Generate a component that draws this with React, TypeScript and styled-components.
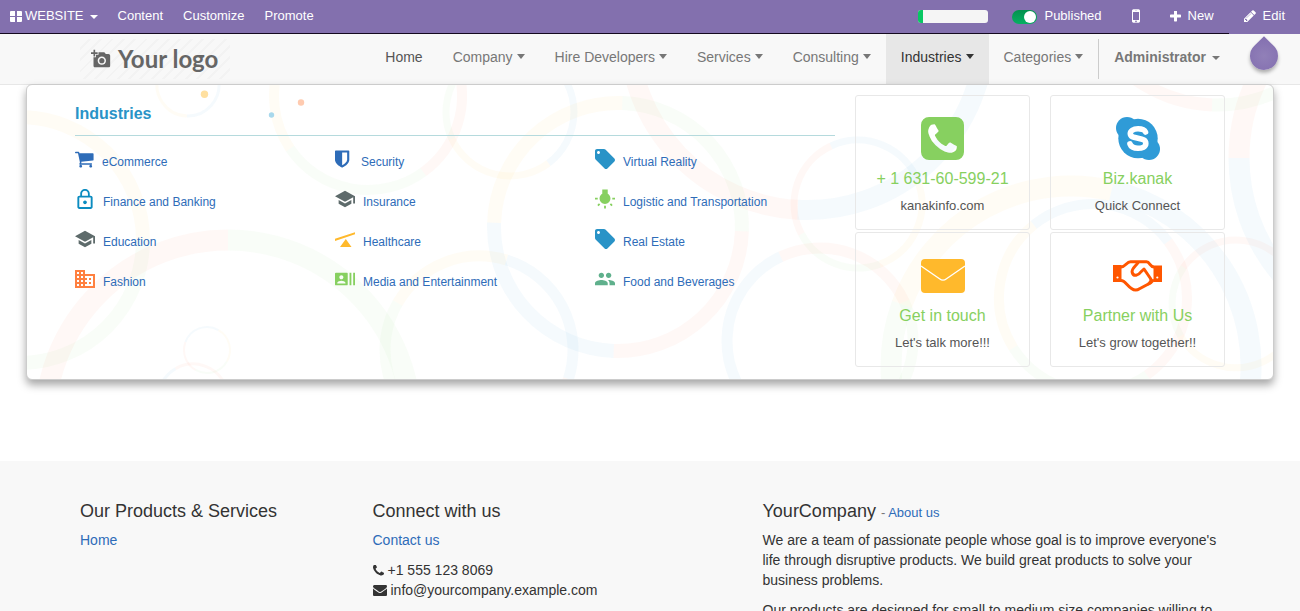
import React from 'react';
import styled, { createGlobalStyle, css } from 'styled-components';
import { MdAddAPhoto } from 'react-icons/md';

const color = {
  bar: '#8370ae',
  link: '#2e6cb8',
  sky: '#2993c7',
  leaf: '#87d060',
  amber: '#ffb92c',
  coral: '#ff8040',
  flame: '#ff5600',
  slate: '#5e6b6b',
};

const GlobalStyle = createGlobalStyle`
  *, *::before, *::after { box-sizing: border-box; }
  body {
    margin: 0;
    background: #fff;
    color: #333;
    font: 14px/20px "Liberation Sans", Arial, sans-serif;
  }
  a { color: ${color.link}; text-decoration: none; }
  button { font: inherit; color: inherit; background: none; border: 0; padding: 0; cursor: pointer; }
  h2, h3, h4, p, ul { margin: 0; padding: 0; font-weight: normal; }
  ul { list-style: none; }
  svg { display: block; flex: none; }
`;

/* ---------- Page shell ---------- */

const Page = styled.div`
  height: 100vh;
  overflow: hidden auto;
  scrollbar-width: none;
`;

const Container = styled.div`
  max-width: 1170px;
  margin: 0 auto;
  padding: 0 15px;
`;

/* ---------- Editor bar ---------- */

const EditorBar = styled.header`
  display: flex;
  justify-content: space-between;
  height: 34px;
  background: ${color.bar};
  box-shadow: inset 0 -1px #14091f;
  color: #fff;
  font-size: 13px;
  line-height: 32px;
`;

const BarGroup = styled.div`
  display: flex;
`;

const BarItem = styled.button<{ $pad?: number; $gap?: number; $filled?: boolean }>`
  display: flex;
  align-items: center;
  gap: ${(p) => p.$gap ?? 6}px;
  height: 34px;
  padding: 0 ${(p) => p.$pad ?? 15}px 2px;
  ${(p) => p.$filled && css`background: ${color.bar};`}
`;

const Progress = styled.div`
  align-self: flex-start;
  width: 70px;
  height: 13px;
  margin: 10px 9px 0 0;
  border-radius: 3px;
  overflow: hidden;
  background: #f5f5f5;
`;

const ProgressFill = styled.div`
  height: 100%;
  background: #08c763;
`;

const PublishLabel = styled.label`
  display: flex;
  align-items: center;
  gap: 7px;
  height: 34px;
  padding: 0 15px 2px;
`;

const Switch = styled.input`
  appearance: none;
  display: flex;
  justify-content: flex-end;
  width: 25px;
  height: 14px;
  margin: 2px 0 0;
  padding: 1px;
  border-radius: 7px;
  background: linear-gradient(#03914e, #06b062);
  &::after {
    content: '';
    width: 12px;
    height: 12px;
    border-radius: 50%;
    background: #fff;
  }
`;

const Caret = styled.span<{ $tall?: boolean }>`
  display: inline-block;
  margin-left: ${(p) => (p.$tall ? 4 : 6)}px;
  vertical-align: ${(p) => (p.$tall ? '3px' : 'middle')};
  border: 4px solid transparent;
  border-top: ${(p) => (p.$tall ? 5 : 4)}px solid currentColor;
  border-bottom: 0;
`;

const DropTip = styled.span`
  position: absolute;
  top: 8px;
  right: 22px;
  width: 28px;
  height: 28px;
  border-radius: 0 50% 50% 50%;
  transform: rotate(45deg);
  background: radial-gradient(#9180b8, #836fb0);
  box-shadow: 2px 2px 4px rgba(0, 0, 0, 0.3);
`;

/* ---------- Site navigation ---------- */

const SiteHeader = styled.div`
  position: relative;
  background: #f8f8f8;
  border-bottom: 1px solid #e7e7e7;
`;

const HeaderRow = styled(Container)`
  display: flex;
  justify-content: space-between;
  padding-right: 0;
`;

const Logo = styled.a`
  display: flex;
  align-items: center;
  gap: 7px;
  width: 150px;
  height: 40px;
  margin: 5px 0;
  padding-left: 11px;
  color: #666;
  font: bold 24px/40px Lato, sans-serif;
  white-space: nowrap;
  background: repeating-linear-gradient(135deg, #f8f8f8 0 6px, #f3f3f3 6px 8px);
`;

const Menu = styled.ul`
  display: flex;
  height: 50px;
`;

const MenuLink = styled.a<{ $active?: boolean; $current?: boolean }>`
  display: block;
  height: 50px;
  padding: 13px 15px;
  color: ${(p) => (p.$active ? '#333' : p.$current ? '#555' : '#777')};
  ${(p) => p.$active && css`background: #e7e7e7;`}
`;

const AccountItem = styled.li`
  height: 40px;
  margin: 5px 0;
  border-left: 1px solid #ccc;
`;

const AccountLink = styled.a`
  display: block;
  padding: 8px 15px;
  color: #777;
  font-weight: bold;
`;

/* ---------- Industries panel ---------- */

const Panel = styled.section`
  position: absolute;
  z-index: 2;
  top: 50px;
  left: 2%;
  right: 2%;
  padding: 10px 48px 12px;
  border: 1px solid #ccc;
  border-radius: 6px;
  background: #fff;
  box-shadow: 0 5px 8px rgba(0, 0, 0, 0.35);
  overflow: hidden;
`;

const Rings = styled.svg`
  position: absolute;
  inset: 0;
  width: 100%;
  height: 100%;
`;

const PanelBody = styled.div`
  position: relative;
  display: grid;
  grid-template-columns: 760fr 370fr;
  gap: 20px;
`;

const PanelTitle = styled.h3`
  padding: 9px 0 11px;
  margin-bottom: 5px;
  border-bottom: 1px solid #b5dadd;
  color: ${color.sky};
  font-size: 16px;
  font-weight: bold;
`;

const IndustryList = styled.ul`
  display: grid;
  grid-template-columns: repeat(3, 1fr);
  column-gap: 20px;
`;

const IndustryLink = styled.a`
  display: flex;
  gap: 8px;
  height: 40px;
  font-size: 12px;
  line-height: 42px;
  svg { margin-top: 8px; }
`;

const CardGrid = styled.div`
  display: grid;
  grid-template-columns: 1fr 1fr;
  gap: 2px 20px;
`;

const Card = styled.a`
  padding: 21px 0 14px;
  border: 1px solid #e8e8e8;
  border-radius: 3px;
  text-align: center;
`;

const CardIcon = styled.div`
  display: flex;
  align-items: center;
  justify-content: center;
  height: 43px;
`;

const CardTitle = styled.h4`
  margin: 9px 0 8px;
  color: ${color.leaf};
  font-size: 16px;
`;

const CardText = styled.p`
  color: #555;
  font-size: 13px;
  line-height: 18px;
`;

/* ---------- Footer ---------- */

const Content = styled.main`
  min-height: 376px;
`;

const Footer = styled.footer`
  padding: 40px 0;
  background: #f8f8f8;
`;

const FooterGrid = styled(Container)`
  display: grid;
  grid-template-columns: 3fr 4fr 5fr;
  padding: 0;
`;

const FooterColumn = styled.div`
  padding: 0 15px;
`;

const FooterTitle = styled.h4`
  margin-bottom: 9px;
  font-size: 18px;
`;

const TitleNote = styled.small`
  color: #777;
  font-size: 13px;
  line-height: 1;
`;

const Paragraph = styled.p`
  margin-bottom: 10px;
`;

const ContactLine = styled.div`
  display: flex;
  align-items: center;
  gap: 4px;
`;

/* ---------- Icons ---------- */

type IconProps = { d: string; box: string; w: number; h: number; fill?: string };

const Icon = ({ d, box, w, h, fill = 'currentColor' }: IconProps) => (
  <svg width={w} height={h} viewBox={box} fill={fill} aria-hidden="true">
    <path d={d} />
  </svg>
);

const paths = {
  grid: 'M0 1a1 1 0 0 1 1-1h4v5H0zM7 0h4a1 1 0 0 1 1 1v4H7zM0 6h5v5H1a1 1 0 0 1-1-1zM7 6h5v4a1 1 0 0 1-1 1H7z',
  mobile:
    'M976 1408q0-33-23.500-56.500t-56.500-23.500-56.500 23.500-23.500 56.500 23.500 56.500 56.500 23.500 56.500-23.500 23.500-56.500zm208-160v-704q0-13-9.500-22.500t-22.500-9.500h-512q-13 0-22.500 9.500t-9.500 22.500v704q0 13 9.500 22.500t22.500 9.500h512q13 0 22.500-9.500t9.500-22.500zm-192-848q0-16-16-16h-160q-16 0-16 16t16 16h160q16 0 16-16zm288-16v1024q0 52-38 90t-90 38h-512q-52 0-90-38t-38-90v-1024q0-52 38-90t90-38h512q52 0 90 38t38 90z',
  plus: 'M1600 736v192q0 40-28 68t-68 28h-416v416q0 40-28 68t-68 28h-192q-40 0-68-28t-28-68v-416h-416q-40 0-68-28t-28-68v-192q0-40 28-68t68-28h416v-416q0-40 28-68t68-28h192q40 0 68 28t28 68v416h416q40 0 68 28t28 68z',
  pencil:
    'M491 1536l91-91-235-235-91 91v107h128v128h107zm523-928q0-22-22-22-10 0-17 7l-542 542q-7 7-7 17 0 22 22 22 10 0 17-7l542-542q7-7 7-17zm-54-192l416 416-832 832h-416v-416zm683 96q0 53-37 90l-166 166-416-416 166-165q36-38 90-38 53 0 91 38l235 234q37 39 37 91z',
  cart: 'M704 1536q0 52-38 90t-90 38-90-38-38-90 38-90 90-38 90 38 38 90zm896 0q0 52-38 90t-90 38-90-38-38-90 38-90 90-38 90 38 38 90zm128-1088v512q0 24-16.500 42.500t-40.500 21.500l-1044 122q13 60 13 70 0 16-24 64h920q26 0 45 19t19 45-19 45-45 19h-1024q-26 0-45-19t-19-45q0-11 8-31.500t16-36 21.500-40 15.500-29.500l-177-823h-204q-26 0-45-19t-19-45 19-45 45-19h256q16 0 28.500 6.500t19.500 15.500 13 24.500 8 26 5.500 29.500 4.500 26h1201q26 0 45 19t19 45z',
  shield:
    'M1344 960v-640h-448v1137q119-63 213-137 235-184 235-360zm192-768v768q0 86-33.500 170.500t-83 150-118 127.500-126.500 103-121 77.500-89.500 49.500-42.500 20q-12 6-26 6t-26-6q-16-7-42.500-20t-89.500-49.500-121-77.500-126.500-103-118-127.500-83-150-33.500-170.500v-768q0-26 19-45t45-19h1152q26 0 45 19t19 45z',
  phone:
    'M1600 1240q0 27-10 70.500t-21 68.500q-21 50-122 106-94 51-186 51-27 0-53-3.500t-57.500-12.500-47-14.500-55.500-20.500-49-18q-98-35-175-83-127-79-264-216t-216-264q-48-77-83-175-3-9-18-49t-20.500-55.500-14.500-47-12.500-57.500-3.500-53q0-92 51-186 56-101 106-122 25-11 68.500-21t70.500-10q14 0 21 3 18 6 53 76 11 19 30 54t35 63.500 31 53.500q3 4 17.500 25t21.500 35.500 7 28.500q0 20-28.500 50t-62 55-62 53-28.500 46q0 9 5 22.500t8.500 20.500 14 24 11.500 19q76 137 174 235t235 174q2 1 19 11.500t24 14 20.500 8.500 22.500 5q18 0 46-28.500t53-62 55-62 50-28.500q14 0 28.500 7t35.500 21.500 25 17.500q25 15 53.500 31t63.500 35 54 30q70 35 76 53 3 7 3 21z',
  phoneSquare:
    'M1408 1193q0-11-2-16-3-8-38.500-29.500t-88.500-49.500l-53-29q-5-3-19-13t-25-15-21-5q-18 0-47 32.500t-57 65.500-44 33q-7 0-16.500-3.500t-15.500-6.500-17-9.500-14-8.500q-99-55-170.500-126.500t-126.500-170.500q-2-3-8.500-14t-9.500-17-6.500-15.500-3.500-16.500q0-13 20.500-33.500t45-38.500 45-39.500 20.500-36.500q0-10-5-21t-15-25-13-19q-3-6-15-28.500t-25-45.500-26.500-47.500-25-40.500-16.500-18-16-2q-48 0-101 22-46 21-80 94.500t-34 130.500q0 16 2.500 34t5 30.500 9 33 10 29.500 12.500 33 11 30q60 164 216.500 320.500t320.500 216.500q6 2 30 11t33 12.500 29.500 10 33 9 30.500 5 34 2.500q57 0 130.500-34t94.500-80q22-53 22-101zm256-777v960q0 119-84.500 203.500t-203.500 84.500h-960q-119 0-203.500-84.500t-84.500-203.500v-960q0-119 84.500-203.500t203.500-84.500h960q119 0 203.500 84.500t84.500 203.500z',
  envelope:
    'M1792 710v794q0 66-47 113t-113 47h-1472q-66 0-113-47t-47-113v-794q44 49 101 87 362 246 497 345 57 42 92.500 65.500t94.500 48 110 24.500h2q51 0 110-24.500t94.500-48 92.500-65.500q170-123 498-345 57-39 100-87zm0-294q0 79-49 151t-122 123q-376 261-468 325-10 7-42.500 30.500t-54 38-52 32.500-57.500 27-50 9h-2q-23 0-50-9t-57.500-27-52-32.500-54-38-42.500-30.500q-91-64-262-182.500t-205-142.500q-62-42-117-115.500t-55-136.500q0-78 41.500-130t118.500-52h1472q65 0 112.500 47t47.500 113z',
  lock: 'M12 17c1.100 0 2-.9 2-2s-.9-2-2-2-2 .9-2 2 .9 2 2 2zm6-9h-1V6c0-2.760-2.240-5-5-5S7 3.240 7 6v2H6c-1.100 0-2 .9-2 2v10c0 1.100.9 2 2 2h12c1.100 0 2-.9 2-2V10c0-1.100-.9-2-2-2zM8.900 6c0-1.710 1.390-3.100 3.100-3.100s3.100 1.390 3.100 3.100v2H8.900V6zM18 20H6V10h12v10z',
  school: 'M5 13.180v4L12 21l7-3.820v-4L12 17l-7-3.820zM12 3L1 9l11 6 9-4.910V17h2V9L12 3z',
  business:
    'M12 7V3H2v18h20V7H12zM6 19H4v-2h2v2zm0-4H4v-2h2v2zm0-4H4V9h2v2zm0-4H4V5h2v2zm4 12H8v-2h2v2zm0-4H8v-2h2v2zm0-4H8V9h2v2zm0-4H8V5h2v2zm10 12h-8v-2h2v-2h-2v-2h2v-2h-2V9h8v10zm-2-8h-2v2h2v-2zm0 4h-2v2h2v-2z',
  seesaw: 'M0 9.700L20 3.300V5.300L0 11.900zM10.800 10L16.500 18H5z',
  actors:
    'M21 5v14h2V5h-2zm-4 14h2V5h-2v14zM14 5H2c-.55 0-1 .45-1 1v12c0 .55.45 1 1 1h12c.55 0 1-.45 1-1V6c0-.55-.45-1-1-1zM8 7.750c1.240 0 2.250 1.010 2.250 2.250S9.240 12.250 8 12.250 5.750 11.240 5.750 10 6.760 7.750 8 7.750zM12.500 17h-9v-.75c0-1.500 3-2.250 4.500-2.250s4.500.75 4.500 2.250V17z',
  tag: 'M21.410 11.580l-9-9C12.050 2.220 11.550 2 11 2H4c-1.100 0-2 .9-2 2v7c0 .55.22 1.050.59 1.420l9 9c.36.36.86.58 1.410.58.55 0 1.050-.22 1.410-.59l7-7c.37-.36.59-.86.59-1.410 0-.55-.23-1.060-.59-1.420zM5.500 7C4.670 7 4 6.330 4 5.500S4.670 4 5.500 4 7 4.670 7 5.500 6.330 7 5.500 7z',
  bulb: 'M3.550 18.540l1.410 1.410 1.800-1.790-1.410-1.410-1.800 1.790zM11 22.450h2V19.500h-2v2.950zM4 10.500H1v2h3v-2zm11-4.190V1.500H9v4.810C7.210 7.350 6 9.280 6 11.500c0 3.310 2.690 6 6 6s6-2.690 6-6c0-2.220-1.210-4.150-3-5.190zm5 4.190v2h3v-2h-3zm-2.760 7.660l1.790 1.800 1.410-1.410-1.800-1.790-1.400 1.400z',
  people:
    'M16 11c1.660 0 2.990-1.340 2.990-3S17.660 5 16 5c-1.660 0-3 1.340-3 3s1.340 3 3 3zm-8 0c1.660 0 2.990-1.340 2.990-3S9.660 5 8 5C6.340 5 5 6.340 5 8s1.340 3 3 3zm0 2c-2.330 0-7 1.170-7 3.500V19h14v-2.500c0-2.330-4.670-3.500-7-3.500zm8 0c-.29 0-.62.02-.97.05 1.160.84 1.970 1.970 1.970 3.450V19h6v-2.500c0-2.330-4.670-3.500-7-3.500z',
};

const SkypeIcon = () => (
  <svg width="44" height="43" viewBox="0 0 44 43" fill="#2f9bd7" aria-hidden="true">
    <circle cx="22" cy="21.500" r="19.700" />
    <circle cx="11" cy="11" r="11" />
    <circle cx="33" cy="32" r="11" />
    <path
      d="M29.500 15C28.500 12.700 26 11.800 22 11.800C17 11.800 14.300 14 14.300 16.500C14.300 20 18 20.400 22 21.200C27 22.200 29.800 23 29.800 26.500C29.800 30 26 31.300 22 31.300C17.500 31.300 15 29.800 14 27"
      fill="none"
      stroke="#fff"
      strokeWidth="5.600"
      strokeLinecap="round"
    />
  </svg>
);

const MailIcon = () => (
  <svg width="44" height="34" viewBox="0 0 44 34" fill="none" aria-hidden="true">
    <rect width="44" height="34" rx="4" fill={color.amber} />
    <path d="M0 7L18.500 19.800Q22 22.500 25.500 19.800L44 7" stroke="#fff" strokeWidth="1.300" />
  </svg>
);

const HandshakeIcon = () => (
  <svg width="49" height="32" viewBox="0 0 49 32" fill="none" stroke={color.flame} strokeWidth="3" strokeLinejoin="round" aria-hidden="true">
    <path d="M0 5h8.500v17H0zM40.500 5.500H49V22h-8.500z" fill={color.flame} stroke="none" />
    <circle cx="4.500" cy="17.500" r="1.100" fill="#fff" stroke="none" />
    <circle cx="44.300" cy="17.500" r="1.100" fill="#fff" stroke="none" />
    <path d="M8 7C12.500 7 13.500 1.800 17.500 1.800H33.500C37 1.800 37 7 41 7M8 20.500C12 20.500 14 25.500 18.500 28.500Q22.500 31.500 26.500 28.800L34.500 24.500Q38.500 23 41 19.500" />
    <path d="M25.500 2C23 6 18 8.500 19.200 12.500C20.500 17 25.500 15.500 27.800 12L31 9L37.500 18.500Q39 21 36 23.500" />
  </svg>
);

/* ---------- Panel background drawing ---------- */

const tint = { y: '#ffb92c', b: '#2996d8', r: '#ff6a3c', g: '#80d860' };
type Tint = keyof typeof tint;
type Segment = [Tint, number, number];
type Ring = { x: number; y: number; r: number; w: number; arcs: Segment[] };

const rings: Ring[] = [
  { x: 20, y: 240, r: 123, w: 14, arcs: [['y', -90, 0], ['g', 0, 90]] },
  { x: 228, y: 423, r: 183, w: 21, arcs: [['r', 180, 270], ['g', 270, 360]] },
  { x: 188, y: 85, r: 31, w: 3, arcs: [['y', 92, 200], ['b', -10, 92]] },
  { x: 368, y: 96, r: 94, w: 10, arcs: [['y', 146, 200], ['g', 54, 146], ['r', -20, 54]] },
  { x: 207, y: 350, r: 23, w: 2, arcs: [['b', 200, 300], ['y', 300, 390], ['g', 30, 120], ['r', 120, 200]] },
  { x: 193, y: 399, r: 35, w: 3, arcs: [['b', 180, 240], ['r', 240, 340]] },
  { x: 479, y: 350, r: 94, w: 11, arcs: [['y', 210, 287], ['b', 287, 378], ['r', 18, 60], ['g', 120, 210]] },
  { x: 510, y: 112, r: 64, w: 7, arcs: [['y', 53, 155], ['g', 155, 230], ['b', -53, 53]] },
  { x: 618, y: 227, r: 124, w: 14, arcs: [['y', 182, 272], ['g', 272, 362], ['r', 2, 92], ['b', 92, 182]] },
  { x: 807, y: 32, r: 178, w: 20, arcs: [['b', 0, 93], ['r', 93, 180]] },
  { x: 858, y: 204, r: 64, w: 7, arcs: [['r', 152, 245], ['b', 245, 340], ['y', -20, 70], ['g', 70, 152]] },
  { x: 820, y: 341, r: 93, w: 11, arcs: [['b', 120, 245], ['r', 245, 335], ['g', -25, 60]] },
  { x: 1071, y: 366, r: 180, w: 21, arcs: [['y', 200, 283], ['b', 283, 370], ['g', 160, 200]] },
  { x: 1093, y: 298, r: 94, w: 10, arcs: [['y', 148, 231], ['b', 231, 323], ['r', -37, 55], ['g', 55, 148]] },
  { x: 1236, y: 304, r: 64, w: 7, arcs: [['g', 150, 215], ['r', 215, 340], ['y', -20, 150]] },
  { x: 1217, y: -35, r: 140, w: 13, arcs: [['r', 92, 150], ['g', 30, 92]] },
  { x: 1419, y: 158, r: 180, w: 21, arcs: [['r', 180, 230], ['b', 100, 180]] },
];

const arcPath = ({ x, y, r }: Ring, from: number, to: number) => {
  const at = (deg: number) => {
    const t = (deg * Math.PI) / 180;
    return `${(x + r * Math.cos(t)).toFixed(1)} ${(y + r * Math.sin(t)).toFixed(1)}`;
  };
  return `M${at(from)}A${r} ${r} 0 ${to - from > 180 ? 1 : 0} 1 ${at(to)}`;
};

const PanelRings = () => (
  <Rings viewBox="27 85 1246 294" preserveAspectRatio="xMidYMid slice" fill="none" aria-hidden="true">
    {rings.map((ring, i) =>
      ring.arcs.map(([c, from, to], j) => (
        <path key={`${i}-${j}`} d={arcPath(ring, from, to)} stroke={tint[c]} strokeWidth={ring.w} opacity="0.048" />
      )),
    )}
    <circle cx="204.500" cy="94.300" r="3.700" fill="#ffe0a0" />
    <circle cx="271.500" cy="115" r="2.700" fill="#a8d8ec" />
    <circle cx="301" cy="102.500" r="3.200" fill="#ffcbb0" />
  </Rings>
);

/* ---------- Data ---------- */

const menuItems = ['Company', 'Hire Developers', 'Services', 'Consulting', 'Industries', 'Categories'];

const sq = { w: 20, h: 20 };
const industries: { name: string; icon: IconProps }[] = [
  { name: 'eCommerce', icon: { d: paths.cart, box: '64 0 1702 1792', w: 19, h: 20, fill: color.link } },
  { name: 'Security', icon: { d: paths.shield, box: '256 0 1613 1792', w: 18, h: 20, fill: color.link } },
  { name: 'Virtual Reality', icon: { d: paths.tag, box: '2 2 20 20', ...sq, fill: color.sky } },
  { name: 'Finance and Banking', icon: { d: paths.lock, box: '1.500 1 21 21', ...sq, fill: '#0c8cc0' } },
  { name: 'Insurance', icon: { d: paths.school, box: '1 1 22 22', ...sq, fill: color.slate } },
  { name: 'Logistic and Transportation', icon: { d: paths.bulb, box: '1 1 22 22', ...sq, fill: color.leaf } },
  { name: 'Education', icon: { d: paths.school, box: '1 1 22 22', ...sq, fill: color.slate } },
  { name: 'Healthcare', icon: { d: paths.seesaw, box: '0 0 20 20', ...sq, fill: color.amber } },
  { name: 'Real Estate', icon: { d: paths.tag, box: '2 2 20 20', ...sq, fill: color.sky } },
  { name: 'Fashion', icon: { d: paths.business, box: '2 2 20 20', ...sq, fill: color.coral } },
  { name: 'Media and Entertainment', icon: { d: paths.actors, box: '1 1 22 22', ...sq, fill: color.leaf } },
  { name: 'Food and Beverages', icon: { d: paths.people, box: '1 1 22 22', ...sq, fill: '#5fb08c' } },
];

const cards = [
  {
    icon: <Icon d={paths.phoneSquare} box="128 128 1536 1536" w={43} h={43} fill={color.leaf} />,
    title: '+ 1 631-60-599-21',
    text: 'kanakinfo.com',
  },
  { icon: <SkypeIcon />, title: 'Biz.kanak', text: 'Quick Connect' },
  { icon: <MailIcon />, title: 'Get in touch', text: "Let's talk more!!!" },
  { icon: <HandshakeIcon />, title: 'Partner with Us', text: "Let's grow together!!" },
];

export default function App() {
  return (
    <Page>
      <GlobalStyle />
      <EditorBar>
        <BarGroup>
          <BarItem $pad={10} $gap={3}>
            <Icon d={paths.grid} box="0 0 12 11" w={12} h={11} />
            <span>
              WEBSITE
              <Caret />
            </span>
          </BarItem>
          <BarItem $pad={10}>Content</BarItem>
          <BarItem $pad={10}>Customize</BarItem>
          <BarItem $pad={10}>Promote</BarItem>
        </BarGroup>
        <BarGroup>
          <Progress role="progressbar" aria-label="Setup progress" aria-valuenow={7}>
            <ProgressFill style={{ width: '7%' }} />
          </Progress>
          <PublishLabel>
            <Switch type="checkbox" defaultChecked />
            Published
          </PublishLabel>
          <BarItem aria-label="Mobile preview">
            <Icon d={paths.mobile} box="512 256 768 1280" w={8} h={14} />
          </BarItem>
          <BarItem $gap={7}>
            <Icon d={paths.plus} box="192 192 1408 1408" w={11} h={11} />
            New
          </BarItem>
          <BarItem $filled $gap={7}>
            <Icon d={paths.pencil} box="128 128 1536 1536" w={12} h={12} />
            Edit
          </BarItem>
        </BarGroup>
      </EditorBar>

      <SiteHeader>
        <HeaderRow>
          <Logo href="#">
            <MdAddAPhoto size={20} />
            Your logo
          </Logo>
          <Menu>
            <li>
              <MenuLink href="#" $current>Home</MenuLink>
            </li>
            {menuItems.map((name) => (
              <li key={name}>
                <MenuLink href="#" $active={name === 'Industries'}>
                  {name}
                  <Caret $tall />
                </MenuLink>
              </li>
            ))}
            <AccountItem>
              <AccountLink href="#">
                Administrator
                <Caret />
              </AccountLink>
            </AccountItem>
          </Menu>
        </HeaderRow>
        <DropTip />
        <Panel>
          <PanelRings />
          <PanelBody>
            <div>
              <PanelTitle>Industries</PanelTitle>
              <IndustryList>
                {industries.map(({ name, icon }) => (
                  <li key={name}>
                    <IndustryLink href="#">
                      <Icon {...icon} />
                      {name}
                    </IndustryLink>
                  </li>
                ))}
              </IndustryList>
            </div>
            <CardGrid>
              {cards.map((card) => (
                <Card href="#" key={card.title}>
                  <CardIcon>{card.icon}</CardIcon>
                  <CardTitle>{card.title}</CardTitle>
                  <CardText>{card.text}</CardText>
                </Card>
              ))}
            </CardGrid>
          </PanelBody>
        </Panel>
      </SiteHeader>

      <Content />

      <Footer>
        <FooterGrid>
          <FooterColumn>
            <FooterTitle>Our Products &amp; Services</FooterTitle>
            <a href="#">Home</a>
          </FooterColumn>
          <FooterColumn>
            <FooterTitle>Connect with us</FooterTitle>
            <Paragraph>
              <a href="#">Contact us</a>
            </Paragraph>
            <ContactLine>
              <Icon d={paths.phone} box="192 192 1408 1408" w={11} h={11} />
              +1 555 123 8069
            </ContactLine>
            <ContactLine>
              <Icon d={paths.envelope} box="0 128 1792 1536" w={14} h={12} />
              info@yourcompany.example.com
            </ContactLine>
          </FooterColumn>
          <FooterColumn>
            <FooterTitle>
              YourCompany{' '}
              <TitleNote>
                - <a href="#">About us</a>
              </TitleNote>
            </FooterTitle>
            <Paragraph>
              We are a team of passionate people whose goal is to improve everyone's life through disruptive products. We
              build great products to solve your business problems.
            </Paragraph>
            <Paragraph>
              Our products are designed for small to medium size companies willing to optimize their performance.
            </Paragraph>
          </FooterColumn>
        </FooterGrid>
      </Footer>
    </Page>
  );
}
